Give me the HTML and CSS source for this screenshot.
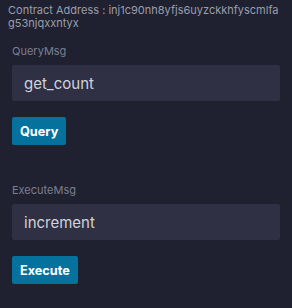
FILE: index.html
```html
<!DOCTYPE html>
<html>

<head>
  <title>contract</title>
  <link rel="stylesheet" href="styles.css">
</head>

<body>
  <div class="contract">
    <p class="address">Contract Address : inj1c90nh8yfjs6uyzckkhfyscmlfag53njqxxntyx</p>

    <div class="msg-box query">
      <label class="msg-label">QueryMsg</label>
      <input class="msg-input" type="text" value="get_count">
      <button class="msg-btn">Query</button>
    </div>

    <div class="msg-box execute">
      <label class="msg-label">ExecuteMsg</label>
      <input class="msg-input" type="text" value="increment">
      <button class="msg-btn">Execute</button>
    </div>
  </div>
</body>

</html>
```

FILE: styles.css
```css
/* reset */
* {
  margin: 0;
  padding: 0;
  box-sizing: border-box;
}

body {
  background-color: #1f2130;
  font-family: Inter, "Noto Sans", sans-serif;
}

.contract {
  padding: 4px 8px;
}

.address {
  font-size: 11px;
  line-height: 13px;
  color: #9b9dab;
  word-break: break-all;
}

.msg-box {
  display: flex;
  flex-direction: column;
  align-items: flex-start;
  padding: 0 4px;
}

.query {
  margin-top: 15px;
}

.execute {
  margin-top: 39px;
}

.msg-label {
  font-size: 11px;
  line-height: 13px;
  color: #7c7e8f;
}

.msg-input {
  width: 100%;
  height: 36px;
  margin-top: 7px;
  padding: 0 12px;
  border: none;
  border-radius: 2px;
  outline: none;
  background-color: #2f3043;
  color: #d2d3dc;
  font-family: Inter, "Noto Sans", sans-serif;
  font-size: 15px;
}

.msg-btn {
  height: 28px;
  margin-top: 16px;
  padding: 0 8px;
  border: none;
  border-radius: 2px;
  background-color: #04729c;
  color: #ffffff;
  font-family: Inter, "Noto Sans", sans-serif;
  font-size: 12.7px;
  font-weight: 700;
  cursor: pointer;
}
```
